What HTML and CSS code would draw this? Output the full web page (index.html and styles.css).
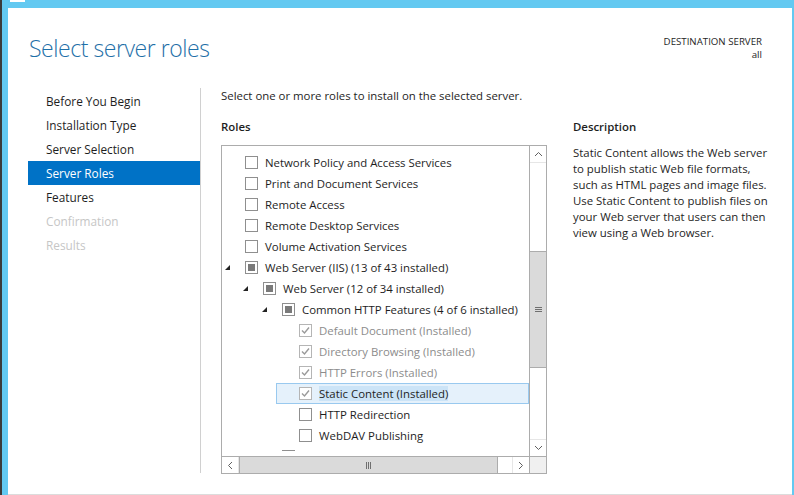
FILE: index.html
```html
<!DOCTYPE html>
<html>
<head>
<meta charset="utf-8">
<link rel="stylesheet" href="styles.css">
</head>
<body>
<div class="screen">
  <div class="dark-edge"></div>
  <div class="window">
    <div class="titlebar"><span class="tb-icon"></span></div>
    <div class="page">
      <header class="head">
        <h1 class="title">Select server roles</h1>
        <div class="dest">
          <div>DESTINATION SERVER</div>
          <div>all</div>
        </div>
      </header>
      <div class="main">
        <nav class="nav">
          <div class="nav-item">Before You Begin</div>
          <div class="nav-item">Installation Type</div>
          <div class="nav-item">Server Selection</div>
          <div class="nav-item active">Server Roles</div>
          <div class="nav-item">Features</div>
          <div class="nav-item disabled">Confirmation</div>
          <div class="nav-item disabled">Results</div>
        </nav>
        <div class="divider"></div>
        <section class="content">
          <p class="intro">Select one or more roles to install on the selected server.</p>
          <div class="cols">
            <div class="roles">
              <div class="label">Roles</div>
              <div class="listbox">
                <div class="viewport">
                  <div class="rows">
                    <div class="row l0"><span class="twisty"></span><span class="cb"></span><span class="txt">Network Policy and Access Services</span></div>
                    <div class="row l0"><span class="twisty"></span><span class="cb"></span><span class="txt">Print and Document Services</span></div>
                    <div class="row l0"><span class="twisty"></span><span class="cb"></span><span class="txt">Remote Access</span></div>
                    <div class="row l0"><span class="twisty"></span><span class="cb"></span><span class="txt">Remote Desktop Services</span></div>
                    <div class="row l0"><span class="twisty"></span><span class="cb"></span><span class="txt">Volume Activation Services</span></div>
                    <div class="row l0"><span class="twisty"><svg width="5" height="5" viewBox="0 0 5 5"><polygon points="5,0 5,5 0,5" fill="#222"/></svg></span><span class="cb partial"><span class="fill"></span></span><span class="txt">Web Server (IIS) (13 of 43 installed)</span></div>
                    <div class="row l1"><span class="twisty"><svg width="5" height="5" viewBox="0 0 5 5"><polygon points="5,0 5,5 0,5" fill="#222"/></svg></span><span class="cb partial"><span class="fill"></span></span><span class="txt">Web Server (12 of 34 installed)</span></div>
                    <div class="row l2"><span class="twisty"><svg width="5" height="5" viewBox="0 0 5 5"><polygon points="5,0 5,5 0,5" fill="#222"/></svg></span><span class="cb partial"><span class="fill"></span></span><span class="txt">Common HTTP Features (4 of 6 installed)</span></div>
                    <div class="row l3 installed"><span class="twisty"></span><span class="cb dis"><svg width="11" height="11" viewBox="0 0 11 11"><polyline points="2,5.5 4.5,8 9,2.5" fill="none" stroke="#9a9a9a" stroke-width="1.4"/></svg></span><span class="txt">Default Document (Installed)</span></div>
                    <div class="row l3 installed"><span class="twisty"></span><span class="cb dis"><svg width="11" height="11" viewBox="0 0 11 11"><polyline points="2,5.5 4.5,8 9,2.5" fill="none" stroke="#9a9a9a" stroke-width="1.4"/></svg></span><span class="txt">Directory Browsing (Installed)</span></div>
                    <div class="row l3 installed"><span class="twisty"></span><span class="cb dis"><svg width="11" height="11" viewBox="0 0 11 11"><polyline points="2,5.5 4.5,8 9,2.5" fill="none" stroke="#9a9a9a" stroke-width="1.4"/></svg></span><span class="txt">HTTP Errors (Installed)</span></div>
                    <div class="row l3 selected"><span class="twisty"></span><span class="cb dis"><svg width="11" height="11" viewBox="0 0 11 11"><polyline points="2,5.5 4.5,8 9,2.5" fill="none" stroke="#9a9a9a" stroke-width="1.4"/></svg></span><span class="txt">Static Content (Installed)</span></div>
                    <div class="row l3"><span class="twisty"></span><span class="cb"></span><span class="txt">HTTP Redirection</span></div>
                    <div class="row l3"><span class="twisty"></span><span class="cb"></span><span class="txt">WebDAV Publishing</span></div>
                    <div class="row l2 clipped"><span class="twisty"></span><span class="cb"></span></div>
                  </div>
                  <div class="vscroll">
                    <div class="arrow"><svg width="9" height="6" viewBox="0 0 9 6"><polyline points="1,5 4.5,1.5 8,5" fill="none" stroke="#606060" stroke-width="1"/></svg></div>
                    <div class="track">
                      <div class="vthumb"><svg width="7" height="7" viewBox="0 0 7 7"><path d="M0 1.5H7M0 3.5H7M0 5.5H7" stroke="#6f6f6f" stroke-width="1"/></svg></div>
                    </div>
                    <div class="arrow"><svg width="9" height="6" viewBox="0 0 9 6"><polyline points="1,1 4.5,4.5 8,1" fill="none" stroke="#606060" stroke-width="1"/></svg></div>
                  </div>
                </div>
                <div class="hscroll">
                  <div class="harrow"><svg width="6" height="9" viewBox="0 0 6 9"><polyline points="5,1 1.5,4.5 5,8" fill="none" stroke="#606060" stroke-width="1"/></svg></div>
                  <div class="htrack">
                    <div class="hthumb"><svg width="7" height="7" viewBox="0 0 7 7"><path d="M1.5 0V7M3.5 0V7M5.5 0V7" stroke="#6f6f6f" stroke-width="1"/></svg></div>
                  </div>
                  <div class="harrow"><svg width="6" height="9" viewBox="0 0 6 9"><polyline points="1,1 4.5,4.5 1,8" fill="none" stroke="#606060" stroke-width="1"/></svg></div>
                  <div class="corner"></div>
                </div>
              </div>
            </div>
            <div class="desc">
              <div class="label">Description</div>
              <p class="desc-text">Static Content allows the Web server to publish static Web file formats, such as HTML pages and image files. Use Static Content to publish files on your Web server that users can then view using a Web browser.</p>
            </div>
          </div>
        </section>
      </div>
    </div>
  </div>
</div>
</body>
</html>
```

FILE: styles.css
```css
* { box-sizing: border-box; }
html, body { margin: 0; padding: 0; }
body {
  width: 794px;
  height: 495px;
  overflow: hidden;
  font-family: "Segoe UI", "Open Sans", sans-serif;
  font-size: 11.4px;
  color: #1e1e1e;
  background: #fff;
}
.screen { display: flex; width: 794px; height: 495px; }
.dark-edge { width: 2px; background: #3a3a3a; }
.window {
  flex: 1;
  display: flex;
  flex-direction: column;
  border-left: 6px solid #63c9f1;
  border-right: 2px solid #63c9f1;
}
.titlebar { height: 8px; background: #63c9f1; padding-left: 2px; }
.tb-icon { display: block; width: 15px; height: 2px; background: #fff; }
.page {
  flex: 1;
  display: flex;
  flex-direction: column;
  background: #fff;
  border-bottom: 1px solid #dcdcdc;
}
.head {
  height: 80px;
  display: flex;
  justify-content: space-between;
  align-items: flex-start;
  padding: 0 30px 0 21px;
}
.title {
  margin: 25px 0 0 0;
  font-weight: 300;
  font-size: 23px;
  letter-spacing: -0.45px;
  line-height: 30px;
  color: #1f70a8;
}
.dest {
  margin-top: 27px;
  text-align: right;
  font-size: 9.7px;
  line-height: 13px;
  color: #1e1e1e;
}
.main { display: flex; height: 385px; }
.nav { width: 172px; margin-left: 20px; padding-top: 1px; }
.nav-item { height: 24px; line-height: 24px; padding-left: 18px; font-size: 11.8px; color: #1e1e1e; }
.nav-item.active { background: #0072c6; color: #fff; }
.nav-item.disabled { color: #c6c6c6; }
.divider { width: 1px; background: #d0d0d0; }
.content { padding-left: 20px; }
.intro { margin: 0 0 15px 0; line-height: 16px; }
.cols { display: flex; gap: 26px; }
.roles { width: 326px; }
.label { line-height: 16px; font-weight: 600; margin-bottom: 10px; }
.listbox { width: 326px; height: 329px; border: 1px solid #acacac; display: flex; flex-direction: column; }
.viewport { height: 310px; display: flex; }
.rows { flex: 1; padding-top: 6px; overflow: hidden; }
.row { height: 21px; display: flex; align-items: center; padding-left: 3px; white-space: nowrap; }
.row.l1 { margin-left: 18px; }
.row.l2 { margin-left: 37px; }
.row.l3 { margin-left: 54px; }
.row.clipped { align-items: flex-start; padding-top: 4px; }
.row.clipped .cb { border-width: 1px 0 0 0; }
.twisty { width: 5px; height: 5px; margin-right: 15px; display: flex; }
.cb {
  width: 13px; height: 13px; border: 1px solid #8f8f8f; background: #fff;
  margin-right: 7px; display: flex; align-items: center; justify-content: center; flex: none;
}
.cb.partial .fill { width: 7px; height: 7px; background: #7a7a7a; }
.cb.dis { border-color: #b5b5b5; }
.row.installed .txt { color: #8c8c8c; }
.row.selected { background: #e5f1fb; border: 1px solid #99c9ef; padding-left: 2px; }
.row.selected .txt { background: #cce4f7; color: #1e1e1e; }
.vscroll { width: 17px; border-left: 1px solid #acacac; display: flex; flex-direction: column; }
.arrow { height: 17px; display: flex; align-items: center; justify-content: center; border-bottom: 1px solid #e6e6e6; }
.arrow:last-child { border-bottom: 0; border-top: 1px solid #e6e6e6; }
.track { flex: 1; }
.vthumb {
  margin-top: 88px; height: 117px; background: #dadada;
  border-top: 1px solid #acacac; border-bottom: 1px solid #acacac;
  display: flex; align-items: center; justify-content: center;
}
.hscroll { height: 17px; border-top: 1px solid #acacac; display: flex; }
.harrow { width: 17px; display: flex; align-items: center; justify-content: center; border-right: 1px solid #e6e6e6; }
.htrack { flex: 1; }
.hthumb {
  width: 259px; height: 100%; background: #dadada;
  border-left: 1px solid #acacac; border-right: 1px solid #acacac;
  display: flex; align-items: center; justify-content: center;
}
.harrow + .htrack + .harrow { border-right: 0; border-left: 1px solid #e6e6e6; }
.corner { width: 17px; background: #f0f0f0; border-left: 1px solid #acacac; }
.desc { width: 197px; }
.desc-text { margin: 0; line-height: 16px; }
```
